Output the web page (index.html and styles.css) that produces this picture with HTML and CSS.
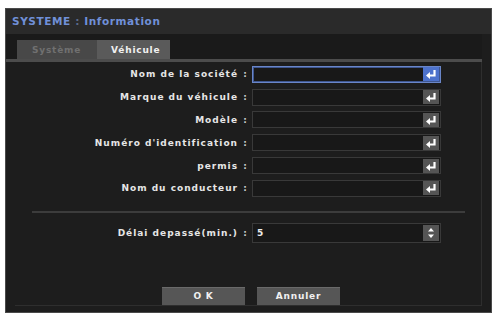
FILE: index.html
```html
<!DOCTYPE html>
<html>
<head>
<meta charset="utf-8">
<link rel="stylesheet" href="styles.css">
</head>
<body>
<div class="window">
  <div class="titlebar"><span class="t1">SYSTEME</span> <span class="tsep">:</span> <span class="t2">Information</span></div>
  <div class="tabstrip">
    <div class="tab">Système</div>
    <div class="tab active">Véhicule</div>
  </div>
  <div class="content">
    <div class="rows">
      <div class="row"><div class="label">Nom de la société</div><div class="colon">:</div><div class="field focus"><span class="val"></span><span class="btn"><svg viewBox="0 0 16 14" width="16" height="14"><path d="M11.5 3 V8.5 H6" fill="none" stroke="#fff" stroke-width="2.2"/><path d="M3 8.5 L7 5 V12 Z" fill="#fff"/></svg></span></div></div>
      <div class="row"><div class="label">Marque du véhicule</div><div class="colon">:</div><div class="field"><span class="val"></span><span class="btn"><svg viewBox="0 0 16 14" width="16" height="14"><path d="M11.5 3 V8.5 H6" fill="none" stroke="#fff" stroke-width="2.2"/><path d="M3 8.5 L7 5 V12 Z" fill="#fff"/></svg></span></div></div>
      <div class="row"><div class="label">Modèle</div><div class="colon">:</div><div class="field"><span class="val"></span><span class="btn"><svg viewBox="0 0 16 14" width="16" height="14"><path d="M11.5 3 V8.5 H6" fill="none" stroke="#fff" stroke-width="2.2"/><path d="M3 8.5 L7 5 V12 Z" fill="#fff"/></svg></span></div></div>
      <div class="row"><div class="label">Numéro d'identification</div><div class="colon">:</div><div class="field"><span class="val"></span><span class="btn"><svg viewBox="0 0 16 14" width="16" height="14"><path d="M11.5 3 V8.5 H6" fill="none" stroke="#fff" stroke-width="2.2"/><path d="M3 8.5 L7 5 V12 Z" fill="#fff"/></svg></span></div></div>
      <div class="row"><div class="label">permis</div><div class="colon">:</div><div class="field"><span class="val"></span><span class="btn"><svg viewBox="0 0 16 14" width="16" height="14"><path d="M11.5 3 V8.5 H6" fill="none" stroke="#fff" stroke-width="2.2"/><path d="M3 8.5 L7 5 V12 Z" fill="#fff"/></svg></span></div></div>
      <div class="row"><div class="label">Nom du conducteur</div><div class="colon">:</div><div class="field"><span class="val"></span><span class="btn"><svg viewBox="0 0 16 14" width="16" height="14"><path d="M11.5 3 V8.5 H6" fill="none" stroke="#fff" stroke-width="2.2"/><path d="M3 8.5 L7 5 V12 Z" fill="#fff"/></svg></span></div></div>
    </div>
    <div class="sep"></div>
    <div class="row delay"><div class="label">Délai depassé(min.)</div><div class="colon">:</div><div class="field tall"><span class="val">5</span><span class="btn spin"><svg viewBox="0 0 16 16" width="16" height="16"><path d="M8 3 L11 6.5 H5 Z" fill="#fff"/><path d="M8 13 L11 9.5 H5 Z" fill="#fff"/></svg></span></div></div>
    <div class="buttons">
      <div class="button">O K</div>
      <div class="button">Annuler</div>
    </div>
  </div>
</div>
</body>
</html>
```
FILE: styles.css
```css
html, body {
  margin: 0;
  padding: 0;
  background: #ffffff;
}
body {
  font-family: "DejaVu Sans", "Liberation Sans", sans-serif;
  font-weight: bold;
}
.window {
  margin: 8px 1px 0 5px;
  height: 305px;
  background: #1d1d1d;
  border: 1px solid #4a4a4a;
  box-sizing: border-box;
  display: flex;
  flex-direction: column;
}
.titlebar {
  height: 25px;
  background: #2a2a2a;
  padding-left: 6px;
  line-height: 25px;
  font-size: 10.5px;
  color: #7090d8;
  letter-spacing: 0.6px;
  white-space: nowrap;
}
.titlebar .tsep { color: #5a6a8a; }
.tabstrip {
  height: 25px;
  background: #1a1a1a;
  padding-left: 11px;
  display: flex;
  align-items: flex-end;
  border-bottom: 3px solid #4c4c4c;
  margin-right: 9px;
}
.tab {
  height: 19px;
  line-height: 20px;
  background: #484848;
  color: #707070;
  font-size: 9px;
  letter-spacing: 0.8px;
  padding: 0 14px 0 15px;
  width: 51px;
}
.tab.active {
  background: #5a5a5a;
  color: #f0f0f0;
  width: 48px;
  padding: 0 11px 0 14px;
}
.content {
  flex: 1;
  margin: 0 9px 6px 9px;
  border-right: 1px solid #2e2e2e;
  border-bottom: 1px solid #2e2e2e;
  display: flex;
  flex-direction: column;
  padding-top: 1px;
}
.row {
  display: flex;
  align-items: center;
  height: 22.8px;
}
.label {
  width: 223px;
  text-align: right;
  color: #e6e6e6;
  font-size: 9px;
  letter-spacing: 1px;
  white-space: nowrap;
}
.colon {
  width: 14px;
  text-align: center;
  color: #c8c8c8;
  font-size: 9px;
}
.field {
  width: 189px;
  height: 17px;
  box-sizing: border-box;
  border: 1px solid #393939;
  background: #181818;
  display: flex;
  align-items: center;
  justify-content: space-between;
}
.field.focus {
  border: 1px solid #6a86c8;
  box-shadow: inset 0 0 0 1px #3e5690;
}
.field .val {
  color: #eeeeee;
  font-size: 9px;
  padding-left: 4px;
}
.btn {
  width: 16px;
  height: 14px;
  background: #555555;
  display: flex;
  align-items: center;
  justify-content: center;
  margin-right: 1px;
}
.field.focus .btn {
  background: #4d72cc;
}
.sep {
  height: 2px;
  background: #3c3c3c;
  margin: 11px 16px 0 17px;
}
.delay {
  margin-top: 10px;
  height: 21px;
}
.field.tall {
  height: 20px;
}
.btn.spin {
  height: 16px;
  width: 16px;
}
.buttons {
  margin-top: auto;
  display: flex;
  gap: 12px;
  padding-left: 147px;
  height: 18px;
}
.button {
  width: 83px;
  height: 17px;
  line-height: 17px;
  background: #565656;
  border-top: 1px solid #6a6a6a;
  color: #f0f0f0;
  text-align: center;
  font-size: 9px;
  letter-spacing: 0.8px;
}
```
